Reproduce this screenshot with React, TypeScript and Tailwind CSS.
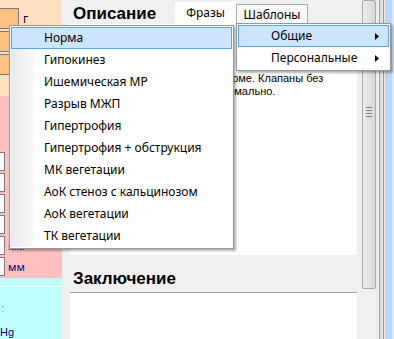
const templates = [
  "Норма",
  "Гипокинез",
  "Ишемическая МР",
  "Разрыв МЖП",
  "Гипертрофия",
  "Гипертрофия + обструкция",
  "МК вегетации",
  "АоК стеноз с кальцинозом",
  "АоК вегетации",
  "ТК вегетации",
];

const groups = ["Общие", "Персональные"];

const uiFont = "font-['Noto_Sans',sans-serif]";

function Arrow() {
  return (
    <svg width="4" height="7" viewBox="0 0 4 7" className="shrink-0">
      <path d="M0 0L4 3.5L0 7Z" fill="#000" />
    </svg>
  );
}

function LeftStrip() {
  return (
    <div className="w-[62px] shrink-0 flex flex-col">
      <div className="h-[97px] bg-[#ffe0c0] pt-[8px] flex flex-col gap-[2px]">
        {["г", "", ""].map((unit, i) => (
          <div key={i} className="flex items-center gap-[4px]">
            <div className="w-[19px] h-[21px] bg-[#ffc080] border border-l-0 border-[#7a7a7a]" />
            <span className={`${uiFont} text-[12px] leading-none`}>{unit}</span>
          </div>
        ))}
      </div>
      <div className="h-[183px] bg-[#ffc0c0] pt-[56px] flex flex-col gap-[2px]">
        {[0, 1, 2, 3, 4, 5].map((i) => (
          <div key={i} className="flex items-center gap-[3px]">
            <div className="w-[5px] h-[19px] bg-white border border-l-0 border-[#7a7a7a]" />
            {i >= 4 && <span className={`${uiFont} text-[11px] leading-none text-[#000080]`}>мм</span>}
          </div>
        ))}
      </div>
      <div className="flex-1 bg-[#c0ffff] flex flex-col">
        <div className="h-[8px]" />
        <div className="h-px bg-white" />
        <div className="flex-1 flex flex-col pt-[15px] text-[11px] leading-[13px]">
          <span className="pl-[1px] text-[#3399ff]">:</span>
          <span className="pt-[11px] text-[#000080]">Hg</span>
        </div>
      </div>
    </div>
  );
}

function MainPanel() {
  return (
    <div className="w-[296px] shrink-0 pl-[8px] pr-[1px] flex flex-col">
      <div className="h-[24px] flex">
        <div className="w-[105px] pt-[4px] pl-[3px] text-[17px] leading-[20px] font-bold">Описание</div>
        <div className={`w-[61px] mt-[2px] bg-white flex items-center justify-center ${uiFont} text-[12px]`}>Фразы</div>
        <div className={`w-[72px] mt-[4px] bg-[#f9f9f9] border border-b-0 border-[#acacac] flex items-center justify-center ${uiFont} text-[12px]`}>
          Шаблоны
        </div>
      </div>
      <div className="h-[231px] bg-white pt-[48px] text-[11px] leading-[13px] whitespace-nowrap">
        <div className="pl-[150px]">норме. Клапаны без</div>
        <div className="pl-[146px]">нормально.</div>
      </div>
      <div className="h-[37px] pt-[14px] pl-[3px] text-[17px] leading-[20px] font-bold">Заключение</div>
      <div className="flex-1 bg-white border-t border-[#a0a0a0]" />
    </div>
  );
}

function ScrollColumn() {
  return (
    <div className="flex-1 flex">
      <div className="pl-[4px]">
        <div className="w-[14px] h-[289px] rounded-[2px] border border-[#a9a9a9] bg-gradient-to-r from-[#ececec] to-[#d8d8d8] flex flex-col items-center pt-[106px] gap-[2px]">
          <div className="w-[6px] h-px bg-[#7c7c7c]" />
          <div className="w-[6px] h-px bg-[#7c7c7c]" />
          <div className="w-[6px] h-px bg-[#7c7c7c]" />
          <div className="w-[6px] h-px bg-[#7c7c7c]" />
        </div>
      </div>
      <div className="w-[3px]" />
      <div className="w-px bg-[#a0a0a0]" />
      <div className="w-[3px] bg-[#e3e3e3]" />
      <div className="w-px bg-[#9a9a9a]" />
      <div className="w-px bg-[#e8e8e8]" />
      <div className="w-[7px] bg-[#bcd8f3]" />
      <div className="flex-1 bg-[#dbe9f6]" />
    </div>
  );
}

function MenuItem({ label, active, arrow }: { label: string; active?: boolean; arrow?: boolean }) {
  return (
    <div
      className={`relative h-[22px] flex items-center justify-between pl-[32px] pr-[9px] border ${
        active ? "bg-[#cce5fc] border-[#5aa5ea]" : "border-transparent"
      }`}
    >
      <span>{label}</span>
      {arrow && <Arrow />}
    </div>
  );
}

function Menus() {
  return (
    <>
      <div className={`absolute left-[9px] top-[25px] w-[225px] bg-white border border-[#979797] p-px shadow-[2px_2px_2px_rgba(0,0,0,0.3)] ${uiFont} text-[12px] text-black`}>
        <div className="absolute left-px top-px bottom-px w-[24px] bg-gradient-to-r from-[#e9e9e9] to-[#fbfbfb]" />
        {templates.map((t, i) => (
          <MenuItem key={t} label={t} active={i === 0} />
        ))}
      </div>
      <div className={`absolute left-[236px] top-[23px] w-[155px] bg-white border border-[#979797] p-px shadow-[2px_2px_2px_rgba(0,0,0,0.3)] ${uiFont} text-[12px] text-black`}>
        {groups.map((g, i) => (
          <MenuItem key={g} label={g} active={i === 0} arrow />
        ))}
      </div>
    </>
  );
}

export default function App() {
  return (
    <div className="relative w-[394px] h-[339px] overflow-hidden bg-[#f0f0f0] flex font-['Liberation_Sans',Arial,sans-serif] text-black">
      <LeftStrip />
      <MainPanel />
      <ScrollColumn />
      <Menus />
    </div>
  );
}
